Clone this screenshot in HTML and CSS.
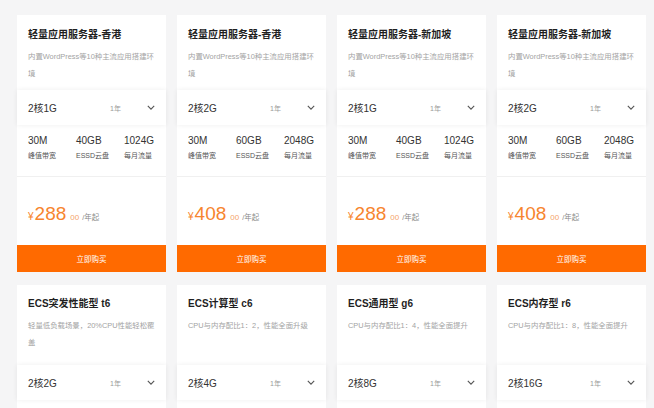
FILE: index.html
```html
<!DOCTYPE html>
<html lang="zh-CN">
<head>
<meta charset="utf-8">
<title>云服务器产品</title>
<link rel="stylesheet" href="styles.css">
</head>
<body>
<div class="grid">
  <div class="card">
    <div class="head">
      <h3 class="title">轻量应用服务器-香港</h3>
      <p class="desc">内置WordPress等10种主流应用搭建环境</p>
    </div>
    <div class="select"><span class="spec">2核1G</span><span class="term">1年</span><svg class="chev" viewBox="0 0 10 6"><path d="M1 1l4 4 4-4"/></svg></div>
    <div class="specs">
      <div class="item"><b>30M</b><span>峰值带宽</span></div>
      <div class="item"><b>40GB</b><span>ESSD云盘</span></div>
      <div class="item"><b>1024G</b><span>每月流量</span></div>
    </div>
    <div class="price"><span class="cur">¥</span><span class="num">288</span><span class="dec">00</span><span class="unit">/年起</span></div>
    <div class="buy">立即购买</div>
  </div>

  <div class="card">
    <div class="head">
      <h3 class="title">轻量应用服务器-香港</h3>
      <p class="desc">内置WordPress等10种主流应用搭建环境</p>
    </div>
    <div class="select"><span class="spec">2核2G</span><span class="term">1年</span><svg class="chev" viewBox="0 0 10 6"><path d="M1 1l4 4 4-4"/></svg></div>
    <div class="specs">
      <div class="item"><b>30M</b><span>峰值带宽</span></div>
      <div class="item"><b>60GB</b><span>ESSD云盘</span></div>
      <div class="item"><b>2048G</b><span>每月流量</span></div>
    </div>
    <div class="price"><span class="cur">¥</span><span class="num">408</span><span class="dec">00</span><span class="unit">/年起</span></div>
    <div class="buy">立即购买</div>
  </div>

  <div class="card">
    <div class="head">
      <h3 class="title">轻量应用服务器-新加坡</h3>
      <p class="desc">内置WordPress等10种主流应用搭建环境</p>
    </div>
    <div class="select"><span class="spec">2核1G</span><span class="term">1年</span><svg class="chev" viewBox="0 0 10 6"><path d="M1 1l4 4 4-4"/></svg></div>
    <div class="specs">
      <div class="item"><b>30M</b><span>峰值带宽</span></div>
      <div class="item"><b>40GB</b><span>ESSD云盘</span></div>
      <div class="item"><b>1024G</b><span>每月流量</span></div>
    </div>
    <div class="price"><span class="cur">¥</span><span class="num">288</span><span class="dec">00</span><span class="unit">/年起</span></div>
    <div class="buy">立即购买</div>
  </div>

  <div class="card">
    <div class="head">
      <h3 class="title">轻量应用服务器-新加坡</h3>
      <p class="desc">内置WordPress等10种主流应用搭建环境</p>
    </div>
    <div class="select"><span class="spec">2核2G</span><span class="term">1年</span><svg class="chev" viewBox="0 0 10 6"><path d="M1 1l4 4 4-4"/></svg></div>
    <div class="specs">
      <div class="item"><b>30M</b><span>峰值带宽</span></div>
      <div class="item"><b>60GB</b><span>ESSD云盘</span></div>
      <div class="item"><b>2048G</b><span>每月流量</span></div>
    </div>
    <div class="price"><span class="cur">¥</span><span class="num">408</span><span class="dec">00</span><span class="unit">/年起</span></div>
    <div class="buy">立即购买</div>
  </div>

  <div class="card card-ecs">
    <div class="head">
      <h3 class="title">ECS突发性能型 t6</h3>
      <p class="desc">轻量低负载场景，20%CPU性能轻松覆盖</p>
    </div>
    <div class="select"><span class="spec">2核2G</span><span class="term">1年</span><svg class="chev" viewBox="0 0 10 6"><path d="M1 1l4 4 4-4"/></svg></div>
  </div>

  <div class="card card-ecs">
    <div class="head">
      <h3 class="title">ECS计算型 c6</h3>
      <p class="desc">CPU与内存配比1：2，性能全面升级</p>
    </div>
    <div class="select"><span class="spec">2核4G</span><span class="term">1年</span><svg class="chev" viewBox="0 0 10 6"><path d="M1 1l4 4 4-4"/></svg></div>
  </div>

  <div class="card card-ecs">
    <div class="head">
      <h3 class="title">ECS通用型 g6</h3>
      <p class="desc">CPU与内存配比1：4，性能全面提升</p>
    </div>
    <div class="select"><span class="spec">2核8G</span><span class="term">1年</span><svg class="chev" viewBox="0 0 10 6"><path d="M1 1l4 4 4-4"/></svg></div>
  </div>

  <div class="card card-ecs">
    <div class="head">
      <h3 class="title">ECS内存型 r6</h3>
      <p class="desc">CPU与内存配比1：8，性能全面提升</p>
    </div>
    <div class="select"><span class="spec">2核16G</span><span class="term">1年</span><svg class="chev" viewBox="0 0 10 6"><path d="M1 1l4 4 4-4"/></svg></div>
  </div>
</div>
</body>
</html>
```

FILE: styles.css
```css
* { box-sizing: border-box; margin: 0; padding: 0; }

html, body {
  background: #f5f5f6;
  overflow: hidden;
}

body {
  font-family: "Liberation Sans", "Noto Sans CJK SC", sans-serif;
  color: #333;
}

.grid {
  display: grid;
  grid-template-columns: repeat(4, 149px);
  column-gap: 11px;
  row-gap: 13px;
  padding: 15px 0 0 17px;
}

.card {
  background: #fff;
  display: flex;
  flex-direction: column;
}

.card-ecs {
  min-height: 140px;
}

.head {
  height: 75px;
  padding: 13px 8px 0 11px;
}

.card-ecs .head {
  height: 80px;
  padding-top: 12px;
}

.title {
  font-size: 10px;
  font-weight: bold;
  line-height: 14px;
  color: #1f1f1f;
}

.desc {
  margin-top: 6px;
  font-size: 7.4px;
  line-height: 17px;
  color: #a3a3a3;
}

.select {
  height: 35px;
  display: flex;
  align-items: center;
  padding: 0 11px;
  box-shadow: 0 0 5px rgba(0, 0, 0, 0.07);
  position: relative;
}

.spec {
  font-size: 10px;
  color: #333;
  width: 82px;
}

.term {
  font-size: 7px;
  color: #9a9a9a;
  flex: 1;
}

.chev {
  width: 8px;
  height: 5px;
  fill: none;
  stroke: #555;
  stroke-width: 1.4;
}

.specs {
  display: flex;
  padding: 9px 11px 0;
  height: 52px;
  border-bottom: 1px solid #f0f0f0;
}

.item {
  display: flex;
  flex-direction: column;
  width: 48px;
}

.item:last-child { width: auto; }

.item b {
  font-weight: normal;
  font-size: 10px;
  line-height: 13px;
  color: #333;
}

.item span {
  margin-top: 4px;
  font-size: 7px;
  line-height: 10px;
  color: #555;
}

.price {
  height: 68px;
  display: flex;
  align-items: baseline;
  padding: 26px 11px 0;
  color: #f7852e;
}

.cur { font-size: 10px; margin-right: 1px; }
.num { font-size: 19px; line-height: 22px; }
.dec { font-size: 8px; margin-left: 4px; color: #f5a46a; }
.unit { font-size: 7.5px; margin-left: 3px; color: #8a8a8a; }

.buy {
  height: 27px;
  background: #ff6a00;
  color: #fff;
  font-size: 7.5px;
  display: flex;
  align-items: center;
  justify-content: center;
}
```
